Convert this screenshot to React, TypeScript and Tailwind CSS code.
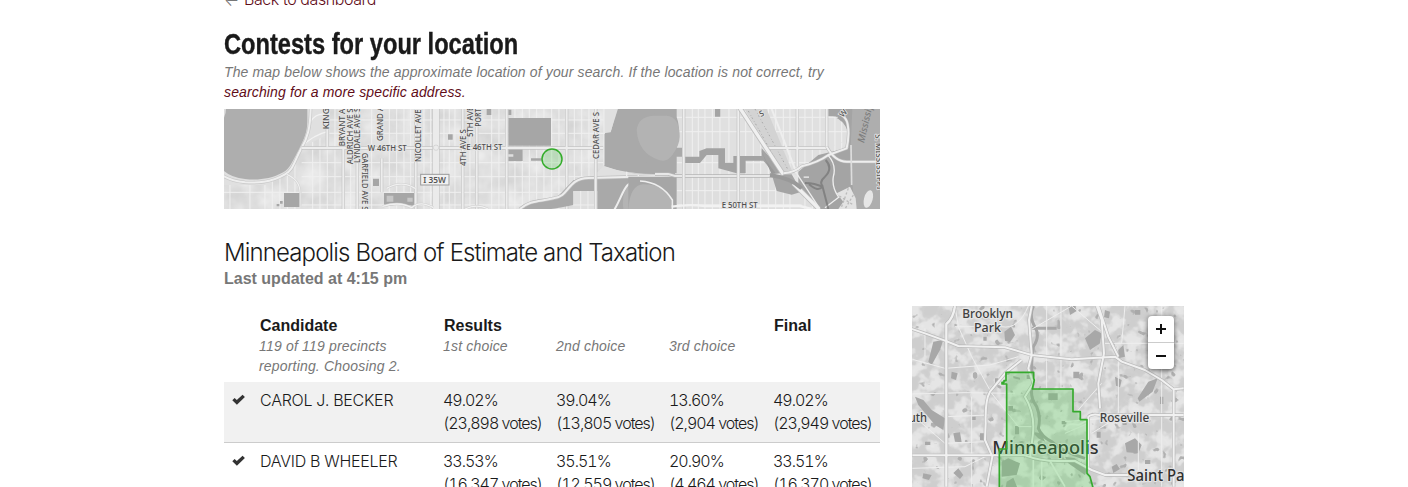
import React from 'react';

const MINOR_X = [157, 180, 202, 225, 278, 300, 322, 345, 392, 455, 508, 530, 552, 572, 612, 632, 672, 688, 705, 750, 815, 837, 885, 907, 928, 950, 972, 995, 1017, 1063, 1085, 1107];
const EAST_X = [112, 130, 150, 172, 195, 222, 272, 295, 317, 340, 362, 385, 405, 450, 472, 495, 540, 560];
const STREET_Y = [45, 85, 173, 215, 262, 300];

function StreetLabel({ x, y, size = 24, rotate = 0, length, italic = false, children }: { x: number; y: number; size?: number; rotate?: number; length: number; italic?: boolean; children: React.ReactNode }) {
  return (
    <text
      transform={`translate(${x} ${y}) rotate(${rotate})`}
      fontSize={size}
      textLength={length}
      lengthAdjust="spacingAndGlyphs"
      fill={italic ? '#7d7d7d' : '#505050'}
      stroke="#e6e6e6"
      strokeWidth={italic ? 0 : 5}
      strokeLinejoin="round"
      paintOrder="stroke"
      fontStyle={italic ? 'italic' : 'normal'}
      fontWeight={500}
    >
      {children}
    </text>
  );
}

function LocationMap() {
  return (
    <svg className="block h-[100px] w-[656px]" viewBox="0 0 656 100" fontFamily="'Noto Sans', 'Open Sans', sans-serif">
      <defs>
        <filter id="streetGrain" x="0" y="0" width="100%" height="100%" colorInterpolationFilters="sRGB">
          <feTurbulence type="fractalNoise" baseFrequency="0.05" numOctaves="3" seed="4" />
          <feColorMatrix values="0.13 0 0 0 0.815  0.13 0 0 0 0.815  0.13 0 0 0 0.815  0 0 0 0 1" />
        </filter>
      </defs>
      <rect width="656" height="100" fill="#e0e0e0" />
      <rect width="656" height="100" filter="url(#streetGrain)" />
      <g transform="translate(-4 -4) scale(.33333)">
        <g stroke="#f0f0f0" strokeWidth="3" fill="none">
          {MINOR_X.map((x) => <path key={x} d={`M${x} 12V312`} />)}
          {STREET_Y.map((y) => <path key={y} d={`M245 ${y}H1150`} />)}
          <path d="M12 262H240M30 235V312M90 240V312M135 240V312" />
        </g>
        {/* lake and shoreline parkway */}
        <path d="M262 0H330V85L250 125 205 205 130 240H12V190L150 200 240 110Z" fill="#e0e0e0" />
        <path d="M272 50Q290 20 325 30M245 125Q280 90 322 80" stroke="#f2f2f2" strokeWidth="4" fill="none" />
        <path d="M8 8H262V50C262 85 248 110 236 135C218 168 210 190 190 202C150 224 110 226 75 222Q35 218 12 198Z" fill="#aeaeae" />
        <path d="M12 12H18Q18 26 12 38Z" fill="#ddd" />
        <path d="M272 0C272 70 262 100 244 130C222 170 220 195 195 208C150 234 110 234 75 232Q35 228 8 212" fill="none" stroke="#c7c7c7" strokeWidth="10" />
        <path d="M272 0C272 70 262 100 244 130C222 170 220 195 195 208C150 234 110 234 75 232Q35 228 8 212" fill="none" stroke="#efefef" strokeWidth="6" />
        <path d="M200 208Q240 225 240 262V312" stroke="#c7c7c7" strokeWidth="6" fill="none" />
        <path d="M200 208Q240 225 240 262V312" stroke="#efefef" strokeWidth="4" fill="none" />
        {/* parks */}
        <g fill="#a6a6a6">
          <path d="M192 264H238V306H192ZM180 288h8v8h-8ZM170 297h8v7h-8ZM459 221H477V243H459ZM492 264H588V304L540 297 500 304 492 298Z" />
          <path d="M865 39H993V122H865ZM865 129H908V168H865V155H880V148H865ZM933 160H965V167H933ZM800 12h14v18h-14ZM865 14h9v16h-9ZM684 88h14v16h-14Z" />
        </g>
        <path d="M500 272h20v18h-20ZM562 278h16v12h-16Z" fill="#c6c6c6" />
        {/* arterial streets */}
        <g fill="none" stroke="#c5c5c5" strokeWidth="10">
          <path d="M244 129H1150M322 12V125M370 130V312M412 12V312M485 160V262M587 12V312M728 12V312M770 12V312M860 12V312M1040 12V312M1127 12V312" />
        </g>
        <g fill="none" stroke="#ededed" strokeWidth="6">
          <path d="M244 129H1150M322 12V125M370 130V312M412 12V312M485 160V262M587 12V312M728 12V312M770 12V312M860 12V312M1040 12V312M1127 12V312" />
        </g>
        <path d="M648 0V312" stroke="#c8c8c8" strokeWidth="22" />
        <path d="M648 0V312" stroke="#ebebeb" strokeWidth="18" />
        <circle cx="648" cy="128" r="8" fill="none" stroke="#ccc" strokeWidth="2" />
        <path d="M500 250Q545 225 585 250M487 304Q540 288 575 308Q600 285 640 308M735 312Q770 295 805 312" stroke="#cfcfcf" strokeWidth="7" fill="none" />
        <path d="M500 250Q545 225 585 250M487 304Q540 288 575 308Q600 285 640 308M735 312Q770 295 805 312" stroke="#f1f1f1" strokeWidth="4" fill="none" />
        {/* creek corridor */}
        <path d="M905 312L950 286 1010 278 1060 226 1120 214 1220 210H1355V312H1132V258H1060V300Q1000 312 990 312Z" fill="#a9a9a9" />
        <path d="M1060 258H1122V312H1060Z" fill="#dfdfdf" />
        <path d="M1082 258V312M1104 258V312M1060 300H1122" stroke="#efefef" strokeWidth="3" />
        <path d="M1195 8H1365V210H1250Q1200 200 1152 183V80H1172Z" fill="#a9a9a9" />
        <path d="M1152 0H1187L1182 45 1172 82 1152 85Z" fill="#e0e0e0" />
        <path d="M1135 85H1155M1152 12V182" stroke="#efefef" strokeWidth="3" />
        <path d="M1275 100Q1275 38 1325 32H1365V145Q1350 170 1320 164Q1275 150 1275 100Z" fill="#b3b3b3" />
        <path d="M1150 184Q1230 212 1365 207V214H1120Z" fill="#e0e0e0" />
        <path d="M1210 312Q1200 230 1265 232Q1350 240 1350 312Z" fill="#b4b4b4" />
        <path d="M900 312C930 285 960 290 1000 280C1050 275 1040 220 1105 219L1400 211" stroke="#bdbdbd" strokeWidth="10" fill="none" />
        <path d="M900 312C930 285 960 290 1000 280C1050 275 1040 220 1105 219L1400 211M1182 316C1210 270 1212 227 1255 227C1300 227 1340 262 1362 282" stroke="#ededed" strokeWidth="6" fill="none" />
        <path d="M1220 200V214M1255 210V226" stroke="#eee" strokeWidth="4" />
        <path d="M1127 12V312" stroke="#c5c5c5" strokeWidth="10" />
        <path d="M1127 12V312" stroke="#ededed" strokeWidth="6" />
      </g>

      <g transform="translate(431 -4) scale(.33333)">
        <path d="M65 12H560V210H450L360 208H65Z" fill="#e0e0e0" />
        <path d="M65 210H360L440 270 490 312H65Z" fill="#dedede" />
        <g stroke="#f0f0f0" strokeWidth="3" fill="none">
          {EAST_X.map((x) => <path key={x} d={`M${x} 12V312`} />)}
          <path d="M65 37H580M65 80H580M65 173H480M65 257H420M65 300H440" />
        </g>
        <path d="M12 10H65V37Q74 60 72 100Q68 115 65 128H86V155H65V205H-70Q0 200 0 10Z" fill="#a9a9a9" />
        <path d="M-55 75Q-50 35-5 32H35Q74 35 74 95Q74 120 52 150Q35 174 10 164Q-50 145-55 75Z" fill="#b3b3b3" />
        <path d="M-80 215H65V312H-80Z" fill="#a6a6a6" />
        <path d="M-35 238Q35 238 48 285V312H-80Q-75 240-35 238Z" fill="#b4b4b4" />
        <path d="M-45 228Q20 232 52 285V312" fill="none" stroke="#eee" strokeWidth="5" />
        <path d="M86 155H133V138L155 130H210V173H235V153H320V130L390 205 360 208 325 167H272V205H245L190 190V150H155L135 174H86Z" fill="#a3a3a3" />
        <path d="M180 12h16v23h-16ZM350 208H410L440 260 410 269 365 258ZM430 200L490 150 580 128V80Q560 40 520 34H550V12H690V312H490L430 240Z" fill="#a4a4a4" />
        <path d="M520 12H580V60Q560 36 520 34Z" fill="#a4a4a4" />
        <path d="M592 12H675V312H600L585 170Z" fill="#aeaeae" />
        <path d="M500 34H535Q572 50 576 80L568 110 500 135Z" fill="#e0e0e0" />
        <path d="M500 37H548M500 80H575M540 34V120M560 50V112" stroke="#f0f0f0" strokeWidth="3" />
        {/* rail corridor */}
        <path d="M268 12L390 205 410 195 335 12Z" fill="#d3d3d3" />
        <path d="M280 18L380 196M300 12L400 196" stroke="#a9a9a9" strokeWidth="3" strokeDasharray="5 9 2 6" fill="none" />
        <path d="M315 130L335 170 365 208H350Z" fill="#999" />
        <path d="M0 207H40L60 213H345L385 207" stroke="#b5b5b5" strokeWidth="11" fill="none" />
        <path d="M0 207H40L60 213H345L385 207" stroke="#e8e8e8" strokeWidth="6" fill="none" />
        <path d="M86 12V312M250 12V312M427 12V185M515 12V125M335 129H520" stroke="#c4c4c4" strokeWidth="10" fill="none" />
        <path d="M86 12V312M250 12V312M427 12V185M515 12V125M335 129H520M350 12L425 205" stroke="#eee" strokeWidth="6" fill="none" />
        <path d="M252 5L385 208M415 235L492 312" stroke="#bebebe" strokeWidth="15" fill="none" />
        <path d="M252 5L385 208M415 235L492 312" stroke="#f0f0f0" strokeWidth="10" fill="none" />
        <path d="M345 210Q410 220 440 250" stroke="#999" strokeWidth="12" fill="none" />
        <path d="M385 205Q420 202 440 184Q490 172 520 150L575 130Q584 90 578 58Q575 40 560 30M515 125Q540 170 575 170H690" stroke="#bbb" strokeWidth="9" fill="none" />
        <path d="M385 205Q420 202 440 184Q490 172 520 150L575 130Q584 90 578 58Q575 40 560 30M515 125Q540 170 575 170H690" stroke="#eee" strokeWidth="6" fill="none" />
        <path d="M425 205L495 312M520 152Q545 180 535 215Q530 245 550 275M510 308L560 270" stroke="#eee" strokeWidth="4" fill="none" />
        <path d="M512 165Q535 190 510 215Q492 230 502 242L520 312M502 245Q480 235 450 234M502 245Q490 262 462 238" stroke="#777" strokeWidth="6" fill="none" opacity=".75" />
        <path d="M588 120L590 240" stroke="#ddd" strokeWidth="5" />
        <path d="M545 265L585 245 602 280 605 312H550L565 290Z" fill="#e3e3e3" />
        <path d="M553 273L595 300M580 250L558 310M595 270L570 312" stroke="#bbb" strokeWidth="4" strokeDasharray="7 6" />
        <ellipse cx="640" cy="282" rx="13" ry="27" fill="#e6e6e6" transform="rotate(15 640 282)" />
        <path d="M446 214h16v5h-16Z" fill="#ddd" />
        <path d="M50 305Q100 297 150 303H435L470 312" stroke="#f2f2f2" strokeWidth="7" fill="none" />
      </g>

      <g transform="translate(-4 -4) scale(.33333)">
        <StreetLabel x={328} y={73} rotate={-90} length={84}>KING'S</StreetLabel>
        <StreetLabel x={376} y={124} rotate={-90} length={140}>BRYANT AVE</StreetLabel>
        <StreetLabel x={398} y={178} rotate={-90} length={168}>ALDRICH AVE S</StreetLabel>
        <StreetLabel x={420} y={174} rotate={-90} length={166}>LYNDALE AVE S</StreetLabel>
        <StreetLabel x={426} y={143} rotate={90} length={173}>GARFIELD AVE S</StreetLabel>
        <StreetLabel x={488} y={108} rotate={-90} length={132}>GRAND AVE</StreetLabel>
        <StreetLabel x={602} y={171} rotate={-90} length={158}>NICOLLET AVE</StreetLabel>
        <StreetLabel x={443} y={137} length={117}>W 46TH ST</StreetLabel>
        <StreetLabel x={737} y={183} rotate={-90} length={110}>4TH AVE S</StreetLabel>
        <StreetLabel x={759} y={96} rotate={-90} length={110}>5TH AVE S</StreetLabel>
        <StreetLabel x={782} y={65} rotate={-90} length={110}>PORTLAND</StreetLabel>
        <StreetLabel x={739} y={135} length={108}>E 46TH ST</StreetLabel>
        <StreetLabel x={1136} y={162} rotate={-90} length={141}>CEDAR AVE S</StreetLabel>
        <rect x="602" y="208" width="85" height="32" fill="#f1f1f1" stroke="#9b9b9b" strokeWidth="3" />
        <text x="610" y="233" fontSize="25" fontWeight="600" fill="#555" textLength="68" lengthAdjust="spacingAndGlyphs">I 35W</text>
      </g>
      <g transform="translate(431 -4) scale(.33333)">
        <StreetLabel x={200} y={309} length={108}>E 50TH ST</StreetLabel>
        <StreetLabel x={317} y={36} rotate={-25} length={13}>S</StreetLabel>
        <StreetLabel x={564} y={38} rotate={-50} length={22}>W</StreetLabel>
        <StreetLabel x={627} y={115} rotate={-77} size={29} length={145} italic>Mississippi</StreetLabel>
        <StreetLabel x={661} y={88} rotate={88} length={166}>S. MISSISSIPPI</StreetLabel>
      </g>
      <circle cx="328" cy="50" r="10" fill="#33cc33" fillOpacity=".2" stroke="#34ac2b" strokeWidth="1.5" />
    </svg>
  );
}

const LAKES = 'M85 125l30-5-10 30-25 45-10-10ZM298 95l20-15 12 25-15 22-15-5ZM30 290l25 10 25 30 40 25-5 35-25-15-50-60ZM540 115l30-25 20 10-5 30-30 20ZM660 430l30-15 20 20-10 25-35-3ZM490 18l20-5 5 20-20 12ZM730 245l28-10-15 40-40 30-5-10ZM480 470l30 5 35 35-5 15-50-35ZM640 150l15-15 5 35-20 5ZM290 485l20-10 35 15-10 35-45 5ZM305 545l20-12 12 30h-35ZM380 395l30 5 10 25-20-10ZM145 400l20-3 5 30-20-2ZM630 230l20 10-5 22-12-5ZM160 505l15 20-10 12-20-18ZM140 215l18 5-5 20-15-5ZM650 345l15 0 0 30-12 0ZM380 80h75v9h-75ZM430 280h28v20h-28ZM225 400h15v20h-15ZM600 30l15 5-3 20-15-3ZM620 500l15-8 10 15-20 12ZM55 520l25 5-8 15-20-5ZM330 378h12v25h-12ZM310 318h14v14h-14ZM505 215h18v20h-18ZM365 225h10v12h-10ZM325 228l20 5v6l-20-4ZM200 350h12v10h-12ZM235 110h10v12h-10ZM270 235h10v16h-10ZM470 363h14v10h-14ZM690 30h16v14h-16ZM575 395h12v18h-12ZM720 480h16v12h-16ZM765 290h10v22h-10ZM60 425h16v10h-16Z';

function CityMap() {
  return (
    <svg className="block h-[181px] w-[272px]" viewBox="0 0 272 181" fontFamily="'Noto Sans', 'Open Sans', sans-serif">
      <defs>
        <filter id="terrain" x="0" y="0" width="100%" height="100%" colorInterpolationFilters="sRGB">
          <feTurbulence type="fractalNoise" baseFrequency="0.07" numOctaves="3" seed="11" />
          <feColorMatrix values="1 0 0 0 0  1 0 0 0 0  1 0 0 0 0  0 0 0 0 1" />
          <feComponentTransfer>
            <feFuncR type="table" tableValues=".81 .81 .81 .81 .81 .82 .87 .9 .9 .91 .91 .91" />
            <feFuncG type="table" tableValues=".81 .81 .81 .81 .81 .82 .87 .9 .9 .91 .91 .91" />
            <feFuncB type="table" tableValues=".81 .81 .81 .81 .81 .82 .87 .9 .9 .91 .91 .91" />
          </feComponentTransfer>
        </filter>
        <filter id="ponds" x="0" y="0" width="100%" height="100%" colorInterpolationFilters="sRGB">
          <feTurbulence type="fractalNoise" baseFrequency="0.12" numOctaves="2" seed="23" />
          <feColorMatrix values="0 0 0 0 .69  0 0 0 0 .69  0 0 0 0 .69  11 0 0 0 -7.6" />
        </filter>
      </defs>
      <rect width="272" height="181" fill="#dadada" />
      <rect width="272" height="181" filter="url(#terrain)" />
      <rect width="272" height="181" filter="url(#ponds)" />
      <g transform="translate(-7 -6) scale(.33333)" fill="none" strokeLinejoin="round">
        <path d={LAKES} fill="#a8a8a8" />
        <path d="M385 18Q370 50 392 85Q405 110 385 140Q375 200 385 250Q370 285 395 320Q408 350 400 385Q410 410 440 425Q470 455 540 475" stroke="#a6a6a6" strokeWidth="9" />
        <g stroke="#eee" strokeWidth="3">
          <path d="M22 178L120 205 255 195 340 170M150 18L160 80 200 170 260 280 340 380H380M22 282L180 278 330 280M380 88L500 18 590 95M425 18V265M468 18V265M150 80H290Q340 90 370 18M600 130H836M770 18V560M22 345L120 430 240 425M125 350L250 345M660 18L650 130M640 180V350L560 400M22 505L180 500 240 470M480 400L550 370M700 400V510M590 250L550 295 520 330M270 18L275 80M60 85V170M200 290V560M480 365L600 355" />
        </g>
        <g stroke="#bababa">
          <path d="M150 18Q145 55 124 72V560" strokeWidth="11" />
          <path d="M15 85L60 100 120 122 160 138 300 142 380 165 500 178 630 170 650 185 720 210 770 240 806 268 836 265M806 268V560M575 18L590 60 597 160 580 250 585 325M580 18L610 110 640 170M380 18L372 60 380 165 370 205 385 250 360 290Q390 340 384 400L376 470M350 180L300 220 255 275Q240 300 242 370L240 420 262 470 245 560M22 466H360Q410 485 470 483H510L560 510 600 525 670 525M550 350Q560 340 585 345H836M550 350V500" strokeWidth="10" />
        </g>
        <g stroke="#f1f1f1">
          <path d="M150 18Q145 55 124 72V560" strokeWidth="7" />
          <path d="M15 85L60 100 120 122 160 138 300 142 380 165 500 178 630 170 650 185 720 210 770 240 806 268 836 265M806 268V560M575 18L590 60 597 160 580 250 585 325M580 18L610 110 640 170M380 18L372 60 380 165 370 205 385 250 360 290Q390 340 384 400L376 470M350 180L300 220 255 275Q240 300 242 370L240 420 262 470 245 560M22 466H360Q410 485 470 483H510L560 510 600 525 670 525M550 350Q560 340 585 345H836M550 350V500" strokeWidth="6" />
        </g>
        <path d="M385 480V560M410 485V560M435 483L480 560M480 390Q485 365 520 375L550 360" stroke="#eee" strokeWidth="5" />
        <g fill="#404040" stroke="#e6e6e6" strokeWidth="7" paintOrder="stroke" fontWeight="500">
          <text x="172" y="53" fontSize="37" textLength="152" lengthAdjust="spacingAndGlyphs">Brooklyn</text>
          <text x="207" y="96" fontSize="37" textLength="81" lengthAdjust="spacingAndGlyphs">Park</text>
          <text x="584" y="367" fontSize="37" textLength="149" lengthAdjust="spacingAndGlyphs">Roseville</text>
          <text x="-88" y="365" fontSize="37" textLength="154" lengthAdjust="spacingAndGlyphs">Plymouth</text>
        </g>
        <g fill="#303030" stroke="#e4e4e4" strokeWidth="6" paintOrder="stroke" fontWeight="500">
          <text x="262" y="461" fontSize="53" textLength="319" lengthAdjust="spacingAndGlyphs">Minneapolis</text>
          <text x="667" y="544" fontSize="47" textLength="212" lengthAdjust="spacingAndGlyphs">Saint Paul</text>
        </g>
        <path d="M303 217H386V235L388 240 382 267H504V335H526V359H546V520L555 530 566 570H283V447H305V252H291V247H297V242H303Z" fill="#45d345" fillOpacity=".25" stroke="#35aa2d" strokeWidth="5" />
      </g>
    </svg>
  );
}

const ROWS = [
  { name: 'CAROL J. BECKER', cells: [['49.02%', '(23,898 votes)'], ['39.04%', '(13,805 votes)'], ['13.60%', '(2,904 votes)'], ['49.02%', '(23,949 votes)']] },
  { name: 'DAVID B WHEELER', cells: [['33.53%', '(16,347 votes)'], ['35.51%', '(12,559 votes)'], ['20.90%', '(4,464 votes)'], ['33.51%', '(16,370 votes)']] },
];

function Check() {
  return (
    <svg className="mt-[5px] ml-2 h-3 w-[13px]" viewBox="0 0 13 12">
      <path d="M.3 6.2 2.6 3.9 4.8 5.9 10.6.8 12.9 3 4.9 10.7Z" fill="#333" />
    </svg>
  );
}

export default function App() {
  return (
    <div className="flex h-[487px] justify-center overflow-hidden bg-white font-['Liberation_Sans',Arial,sans-serif] text-[#1a1a1a]">
      <div className="w-[960px]">
        <div className="-mt-[13px] flex h-6 gap-[4px] font-['Inter','Liberation_Sans',sans-serif] text-base leading-6 font-light tracking-[-0.42px] whitespace-nowrap text-[#5f0c18]">
          <span className="w-4 pt-px text-[#777]">←</span>
          <span>Back to dashboard</span>
        </div>
        <h1 className="mt-[15px] h-9 origin-left scale-x-[0.788] text-[30px] leading-9 font-bold whitespace-nowrap [-webkit-text-stroke:0.4px_#1a1a1a]">Contests for your location</h1>
        <p className="h-[47px] text-sm leading-5 tracking-[0.137px] whitespace-nowrap text-[#777] italic">
          The map below shows the approximate location of your search. If the location is not correct, try
          <br />
          <a className="text-[#5f0c18]">searching for a more specific address.</a>
        </p>
        <LocationMap />
        <h2 className="mt-[29px] h-[30px] font-['Inter','Liberation_Sans',sans-serif] text-[24px] leading-[30px] font-light tracking-[-0.86px] whitespace-nowrap">Minneapolis Board of Estimate and Taxation</h2>
        <h3 className="h-[38px] text-base leading-[22px] font-bold text-[#777]">Last updated at 4:15 pm</h3>
        <div className="flex gap-8">
          <div className="w-[656px]">
            <div className="grid h-[76px] grid-cols-[36px_184px_113px_113px_104px_106px] pt-2 whitespace-nowrap">
              <span />
              {[['Candidate', '119 of 119 precincts', 'reporting. Choosing 2.'], ['Results', '1st choice'], ['', '2nd choice'], ['', '3rd choice'], ['Final', '']].map(([title, first, second], i) => (
                <div key={i}>
                  <div className="h-[22px] text-base leading-[23px] font-bold">{title}</div>
                  <div className="-ml-px text-sm leading-5 tracking-[0.18px] text-[#777] italic">{first}<br />{second}</div>
                </div>
              ))}
            </div>
            {ROWS.map((row) => (
              <div key={row.name} className="grid h-[61px] grid-cols-[36px_184px_113px_113px_104px_106px] border-b border-[#ccc] py-[7px] font-['Inter','Liberation_Sans',sans-serif] text-base leading-[23px] font-light whitespace-nowrap tabular-nums odd:bg-white even:bg-[#f1f1f1]">
                <Check />
                <span className="tracking-[-0.25px]">{row.name}</span>
                {row.cells.map(([share, votes], i) => (
                  <div key={i} className="-ml-px tracking-[-1px]"><span className="tracking-[-1px]">{share}</span><br />{votes}</div>
                ))}
              </div>
            ))}
          </div>
          <div className="relative h-[181px] w-[272px] overflow-hidden">
            <CityMap />
            <div className="absolute top-[10px] right-[10px] h-[53px] w-[26px] rounded bg-white shadow-[0_1px_5px_rgba(0,0,0,0.65)]">
              <div className="flex h-[27px] items-center justify-center border-b border-[#ccc]">
                <svg className="size-[10px]" viewBox="0 0 10 10"><path d="M5 0V10M0 5H10" stroke="#111" strokeWidth="2" /></svg>
              </div>
              <div className="flex h-[26px] items-center justify-center">
                <svg className="size-[10px]" viewBox="0 0 10 10"><path d="M0 5H10" stroke="#111" strokeWidth="2" /></svg>
              </div>
            </div>
          </div>
        </div>
      </div>
    </div>
  );
}
